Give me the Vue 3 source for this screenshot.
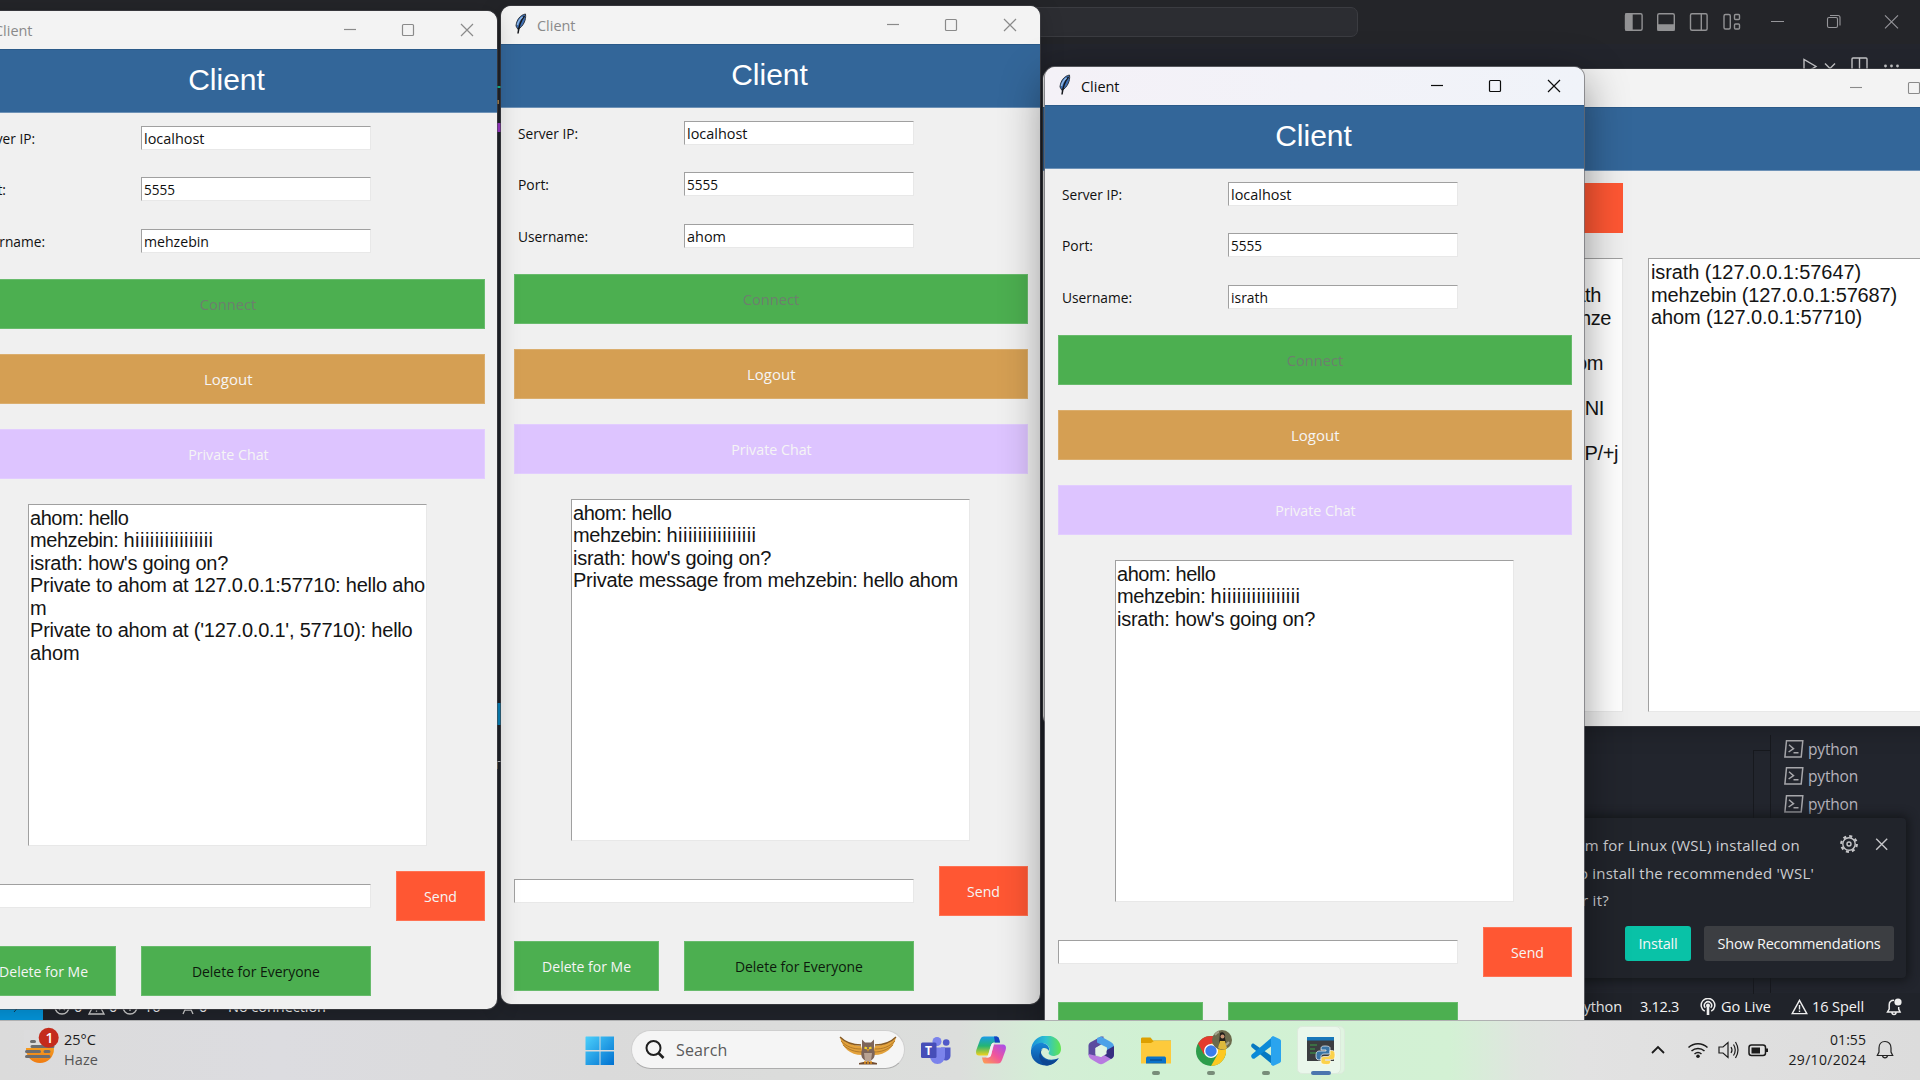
<script setup>
// Adjusts a run of text to the given width in pixels: by tracking, or,
// with the .x modifier, by condensing the glyphs themselves.
const vFit = {
  mounted(el, { value, modifiers }) {
    if (!value) return
    const w = el.getBoundingClientRect().width
    if (modifiers.x) {
      el.style.transform = `scaleX(${value / w})`
      return
    }
    el.style.letterSpacing = (value - w) / el.textContent.length + 'px'
  },
}

const common = [
  [{ t: 'ahom: hello', w: 98.5 }],
  [{ t: 'mehzebin: ', w: 93.5 }, { t: 'hiiiiiiiiiiiiiiii', w: 90 }],
  [{ t: "israth: how's going on?", w: 198 }],
]
const clients = [
  { id: 'second', user: 'ahom', uw: 39, lines: [...common, [{ t: 'Private message from mehzebin: hello ahom', w: 385 }]] },
  {
    id: 'first', user: 'mehzebin', uw: 65,
    lines: [
      ...common,
      [{ t: 'Private to ahom at 127.0.0.1:57710: hello aho', w: 395 }],
      [{ t: 'm', w: 17 }],
      [{ t: "Private to ahom at ('127.0.0.1', 57710): hello", w: 382.5 }],
      [{ t: 'ahom', w: 49.5 }],
    ],
  },
  { id: 'third', user: 'israth', uw: 37, lines: common },
]
const serverLog = [
  { t: 'israth', e: 21 }, { t: 'mehze', e: 11 }, { t: '', e: 0 }, { t: 'ahom', e: 19 },
  { t: '', e: 0 }, { t: 'NI', e: 18 }, { t: '', e: 0 }, { t: 'P/+j', e: 4 },
]
const users = [
  { t: 'israth (127.0.0.1:57647)', w: 210 },
  { t: 'mehzebin (127.0.0.1:57687)', w: 246 },
  { t: 'ahom (127.0.0.1:57710)', w: 211 },
]
</script>

<template>
  <div class="desktop">
    <!-- code editor in the background -->
    <div class="vscode">
      <div class="vs-title">
        <div class="vs-search"></div>
        <svg class="vs-icons" width="340" height="44" viewBox="1580 0 340 44" fill="none" stroke="#929294" stroke-width="1.4">
          <rect x="1625.5" y="13.7" width="16.6" height="16.6" rx="1.5" /><path d="M1626 14h6v16h-6z" fill="#929294" />
          <rect x="1657.7" y="13.7" width="16.6" height="16.6" rx="1.5" /><path d="M1658 25h16v5h-16z" fill="#929294" />
          <rect x="1690.5" y="13.7" width="16.6" height="16.6" rx="1.5" /><path d="M1701.3 14v16" />
          <rect x="1724" y="14.5" width="6.3" height="14.5" rx="1.5" /><rect x="1734.5" y="14.5" width="5" height="5" rx="1" /><rect x="1734.5" y="24" width="5" height="5" rx="1" />
          <g stroke="#96969a" stroke-width="1.1"><path d="M1771 21.5h13M1885 15.3l13 13M1898 15.3l-13 13" /><rect x="1827.5" y="17.5" width="10" height="10" rx="1.5" /><path d="M1830 15.5h8a2 2 0 0 1 2 2v8" /></g>
        </svg>
      </div>
      <div class="vs-tabs">
        <svg width="130" height="26" viewBox="1790 44 130 26" fill="none" stroke="#c5c5c8" stroke-width="1.4">
          <path d="M1804 59.5v14l12-7z" /><path d="M1825 63.5l5 5 5-5" /><rect x="1852" y="58" width="15" height="16" rx="1" /><path d="M1859.5 58v14" />
          <g fill="#c5c5c8" stroke="none"><circle cx="1885.5" cy="66" r="1.4" /><circle cx="1891.5" cy="66" r="1.4" /><circle cx="1897.5" cy="66" r="1.4" /></g>
        </svg>
      </div>
      <div class="vs-body">
        <svg class="slivers" width="4" height="720" viewBox="497 70 4 720"><path d="M497 86h4v2h-4z" fill="#10c5a2" /><path d="M497 100h2v4h-2z" fill="#b08a52" /><path d="M497 123h4v9h-4z" fill="#a63cd6" /><path d="M497 703h4v22h-4z" fill="#0b8cc6" /><path d="M497 761h4v1h-4z" fill="#c5c5c8" /><path d="M497 762h1v7h-1z" fill="#a8834c" /></svg>
        <div class="terms">
          <div v-for="i in 3" :key="i" class="term">
            <svg width="20" height="18" viewBox="0 0 20 18" fill="none" stroke="#a7a7ab" stroke-width="1.5"><path d="M2.5.8h16.3l-1.6 16.2H.9z" /><path d="M5 4.8l4.5 3.8L4.600 12M9.500 12.700h5" /></svg>
            <span v-fit="50">python</span>
          </div>
        </div>
      </div>
      <div class="vs-status">
        <div class="remote"><svg width="10" height="14" viewBox="0 0 10 14" stroke="#14384a" fill="none"><path d="M1 12l7-8" /></svg></div>
        <svg class="st1" width="16" height="16" viewBox="0 0 16 16" fill="none" stroke="#ccc" stroke-width="1.3"><circle cx="8" cy="8" r="7" /><path d="M5 5l6 6M11 5l-6 6" /></svg>
        <span class="st2">0</span>
        <svg class="st3" width="17" height="16" viewBox="0 0 17 16" fill="none" stroke="#ccc" stroke-width="1.3"><path d="M8.5 1L16 15H1zM8.5 6v4M8.5 11.5v1.3" /></svg>
        <span class="st4">0</span>
        <svg class="st5" width="16" height="16" viewBox="0 0 16 16" fill="none" stroke="#ccc" stroke-width="1.3"><circle cx="8" cy="8" r="7" /><path d="M8 7v5M8 4v1.5" /></svg>
        <span class="st6">16</span>
        <svg class="st7" width="14" height="16" viewBox="0 0 14 16" fill="none" stroke="#ccc" stroke-width="1.3"><path d="M7 4L2 15M7 4l5 11M4 11h6M3 1a6 6 0 0 0 0 6M11 1a6 6 0 0 1 0 6" /></svg>
        <span class="st8">0</span>
        <span v-fit="98" class="st9">No connection</span>
        <div class="st-right">
          <span v-fit="47">Python</span>
          <span v-fit="39" class="ver">3.12.3</span>
          <svg class="live" width="16" height="18" viewBox="0 0 16 18" fill="none" stroke="#eee" stroke-width="1.5"><path d="M4.8 13.2a6.8 6.8 0 1 1 6.4 0" /><path d="M5.3 9.8a3.6 3.6 0 1 1 5.4 0" /><circle cx="8" cy="7.4" r="1.2" fill="#eee" /><path d="M8 8v9" stroke-width="2.6" /></svg>
          <span v-fit="50">Go Live</span>
          <svg class="warn" width="17" height="16" viewBox="0 0 17 16" fill="none" stroke="#eee" stroke-width="1.4"><path d="M8.5 1.3L15.8 14.6H1.2zM8.5 6v4.5M8.5 11.5v1.5" /></svg>
          <span v-fit="52">16 Spell</span>
          <svg class="vbell" width="16" height="18" viewBox="0 0 16 18" fill="none" stroke="#eee" stroke-width="1.5"><path d="M8 2.2C4.7 2.2 3.2 4.5 3.2 7v4L1.5 14h12.6L12.7 11V9M6 14.5c0 2.6 4 2.6 4 0" /><circle cx="12" cy="4" r="3.6" fill="#eee" stroke="none" /></svg>
        </div>
      </div>
    </div>

    <div class="toast">
      <div class="toast-top">
        <div class="toast-text">
          <p><span v-fit="224">em for Linux (WSL) installed on</span></p>
          <p class="l2"><span v-fit="235">o install the recommended 'WSL'</span></p>
          <p class="l3"><span v-fit="27">r it?</span></p>
        </div>
        <svg class="toast-ic" width="60" height="20" viewBox="0 0 60 20" fill="none" stroke="#c5c5c8" stroke-width="1.4">
          <circle cx="10" cy="10" r="6.2" /><circle cx="10" cy="10" r="2" /><circle cx="10" cy="10" r="7.8" stroke-width="2.2" stroke-dasharray="3.06 3.06" />
          <path d="M37.2 4.7l11 11M48.2 4.7l-11 11" />
        </svg>
      </div>
      <div class="toast-btns">
        <div class="tb install"><span v-fit="39">Install</span></div>
        <div class="tb show"><span v-fit="163">Show Recommendations</span></div>
      </div>
    </div>

    <!-- server window -->
    <div class="win server">
      <div class="titlebar">
        <svg class="wc" width="153" height="38" viewBox="386 0 153 38" fill="none" stroke="#8a8a8a" stroke-width="1.1"><path d="M386 18.5h12" /><rect x="444.5" y="13.5" width="11" height="11" rx="1" /></svg>
      </div>
      <div class="banner"></div>
      <div class="sv-body">
        <div class="sv-left">
          <div class="sv-btn"></div>
          <div class="sunken sv-log">
            <div v-for="(l, i) in serverLog" :key="i" class="line" :style="{ paddingRight: l.e + 'px' }">{{ l.t }}</div>
          </div>
        </div>
        <div class="sunken sv-users">
          <div v-for="u in users" :key="u.t" class="line"><span v-fit="u.w">{{ u.t }}</span></div>
        </div>
      </div>
    </div>

    <!-- client windows -->
    <div v-for="c in clients" :key="c.id" class="win client" :class="c.id">
      <div class="titlebar">
        <svg class="feather" width="14" height="22" viewBox="0 0 14 22"><path d="M11.5 1C6 2 2.500 7 2 13l2 3.500C9 13.500 12.500 7 11.500 1z" fill="#3d6fb5" stroke="#303740" /><path d="M10.500 3C7 7 5 12 4 20.500" stroke="#15171c" stroke-width="1.500" fill="none" /><path d="M8.500 4C6 6 4 9 3.500 12" stroke="#93bbe8" stroke-width="1.400" fill="none" /></svg>
        <span v-fit.x="38.5" class="wt">Client</span>
        <svg class="wc" width="153" height="38" viewBox="386 0 153 38" fill="none" stroke="currentColor" stroke-width="1.2"><path d="M386 18.5h12" /><rect x="444.5" y="13.5" width="11" height="11" rx="1" /><path d="M503 13l12 12M515 13l-12 12" /></svg>
      </div>
      <div class="banner"><span>Client</span></div>
      <div class="form">
        <div class="row"><span class="lab"><span v-fit.x="60">Server IP:</span></span><div class="sunken entry"><span v-fit.x="60.5">localhost</span></div></div>
        <div class="row"><span class="lab"><span v-fit.x="31">Port:</span></span><div class="sunken entry"><span v-fit.x="31">5555</span></div></div>
        <div class="row"><span class="lab"><span v-fit.x="70">Username:</span></span><div class="sunken entry"><span v-fit.x="c.uw">{{ c.user }}</span></div></div>
        <div class="btn green"><span v-fit.x="56.5" class="dis">Connect</span></div>
        <div class="btn orange"><span v-fit.x="48.5">Logout</span></div>
        <div class="btn violet"><span v-fit.x="80.5">Private Chat</span></div>
        <div class="sunken chat"><div v-for="(l, i) in c.lines" :key="i" class="line"><span v-for="p in l" :key="p.t" v-fit="p.w">{{ p.t }}</span></div></div>
        <div class="sendrow"><div class="sunken msg"></div><div class="btn send"><span v-fit.x="33">Send</span></div></div>
        <div class="delrow"><div class="btn green me"><span v-fit.x="89">Delete for Me</span></div><div class="btn green all"><span v-fit.x="128">Delete for Everyone</span></div></div>
      </div>
    </div>

    <!-- taskbar -->
    <div class="taskbar">
      <div class="weather">
        <svg width="36" height="40" viewBox="23 1026 36 40"><defs><linearGradient id="sun" x1="0" y1="0" x2="0" y2="1"><stop offset="0" stop-color="#f8b62d" /><stop offset="1" stop-color="#f07c12" /></linearGradient></defs><circle cx="40" cy="1049" r="14" fill="url(#sun)" /><path d="M24 1030h18v18H24z" fill="#dcdcdd" /><path d="M31.5 1041.5h3M32 1046.5h21M26.5 1051.5h13M45 1051.5h4M26.5 1056.5h22.5" stroke="#6c6d70" stroke-width="3" stroke-linecap="round" /><circle cx="48.7" cy="1037.8" r="10" fill="#c42b1c" /><text x="45.5" y="1043" font-size="14" fill="#fff" font-family="Open Sans" font-weight="600">1</text></svg>
        <div class="wtext"><span v-fit="32">25°C</span><span v-fit="34" class="haze">Haze</span></div>
      </div>
      <div class="apps">
        <svg class="ic" viewBox="0 0 30 30"><defs><linearGradient id="wn" x1="0" y1="0" x2="1" y2="1"><stop offset="0" stop-color="#4cd0fb" /><stop offset="1" stop-color="#0070d0" /></linearGradient></defs><path d="M1 .5h13.5V14H.5V1zM15.5.5h13.5V14H15.5zM.5 15.5h14V29H.5zM15.5 15.5h13.5V29H15.5z" fill="url(#wn)" /></svg>
        <div class="search">
          <svg width="20" height="20" viewBox="0 0 20 20" fill="none" stroke="#1f1f1f"><circle cx="8.5" cy="8" r="7" stroke-width="2" /><path d="M13.5 13l5 5" stroke-width="2.6" /></svg>
          <span v-fit="51.5">Search</span>
          <svg class="owl" width="58" height="30" viewBox="0 0 58 30"><g fill="#e3a23c"><path d="M1 1c4 5 12 8 21 9l3 9C12 20 3 12 1 1z" /><path d="M57 1c-4 5-12 8-21 9l-3 9C46 20 55 12 57 1z" /></g><g stroke="#a56f24" stroke-width=".8" fill="none"><path d="M2 5c6 6 12 8 20 8M4 9c6 5 12 7 19 7M56 5c-6 6-12 8-20 8M54 9c-6 5-12 7-19 7" /></g><path d="M1 1c5 5 12 8 21 8M57 1c-5 5-12 8-21 8" stroke="#875a22" stroke-width="1.4" fill="none" /><path d="M23 3.5l3 3h6l3-3v10c2 6 0 11-6 12-6-1-8-6-6-12z" fill="#7c6459" /><path d="M25 17h8l-1 8h-6z" fill="#b9a292" /><path d="M25.5 11.500l2.500 1M32.500 11.500l-2.500 1" stroke="#f5d22d" stroke-width="2" /><path d="M28 13h2l-1 3z" fill="#e6a11a" /><path d="M20 27q9-3 18 0v1.500H20z" fill="#714c31" /><path d="M26 25v3M29 25v3M32 25v3" stroke="#e8981d" stroke-width="1.400" /></svg>
        </div>
        <svg class="ic" viewBox="0 0 30 30"><circle cx="16" cy="5.5" r="4.5" fill="#7b83eb" /><circle cx="25.2" cy="6.5" r="3.3" fill="#5059c9" /><path d="M20 11.5h9.500v8c0 6-7 6-9.500 3z" fill="#5059c9" /><path d="M9 11.500h15v9a7.500 7.500 0 0 1-15 0z" fill="#7b83eb" /><rect x="0" y="6.500" width="15.500" height="15.500" rx="1.500" fill="#464eb8" /><text x="3.900" y="18.500" font-family="Open Sans" font-weight="700" font-size="12" fill="#fff">T</text></svg>
        <svg class="ic" viewBox="0 0 30 30"><defs><linearGradient id="c1" x1="0" y1="0" x2="0" y2="1"><stop offset="0" stop-color="#1a9ce8" /><stop offset=".5" stop-color="#24b573" /><stop offset="1" stop-color="#f4d21c" /></linearGradient><linearGradient id="c2" x1="1" y1="0" x2="0" y2="1"><stop offset="0" stop-color="#a34df0" /><stop offset=".5" stop-color="#f0559c" /><stop offset="1" stop-color="#ffa44c" /></linearGradient></defs><path d="M8 .5h12c3 0 3 2 4 6h-5c-3 0-4 2-5 6l-2 7H3c-3 0-3.500-3-2.500-6L4 4C5 1.500 6 .5 8 .5z" fill="url(#c1)" /><path d="M18 .5h2c3 0 3 2 4 6h-5z" fill="#1641bf" /><path d="M22 27.500H10c-3 0-3-2-4-6h5c3 0 4-2 5-6l2-7h9c3 0 3.500 3 2.500 6L26 24c-1 2.500-2 3.500-4 3.500z" fill="url(#c2)" /><path d="M14 12.500c1-4 2-6 4-6l-3 13c-1 2-2 2-5 2 2-1 3-5 4-9z" fill="#f5eef3" /></svg>
        <svg class="ic" viewBox="0 0 30 30"><defs><linearGradient id="e1" x1="0" y1="0" x2="1" y2="0"><stop offset="0" stop-color="#168edb" /><stop offset=".5" stop-color="#2ec1d1" /><stop offset="1" stop-color="#62e64e" /></linearGradient><linearGradient id="e2" x1="0" y1="0" x2="0" y2="1"><stop offset="0" stop-color="#1687d8" /><stop offset="1" stop-color="#0b4a9a" /></linearGradient></defs><path d="M0 14C1 4 8-.5 15-.5 25-.5 30 6 30 13c0 5-4 7-8 7-4-1-5-2-4-4 2-3-1-9-7-9C6 7 2 10 0 14z" fill="url(#e1)" /><path d="M0 14C2 9 7 6 12 7c4 1 7 4 6 8-1-2-3-3-5-3-3 0-4 4-2 7 3 5 10 6 17 3-4 6-9 7.500-13 7.500C6 29.500-1 23 0 14z" fill="url(#e2)" /><path d="M12 12.500c-3 2-3 8 2 11 4 2 9 2 13-1-3 5-8 7-12 7-5-2-8-8-6-13 .5-2 2-3.500 3-4z" fill="#0d4692" /></svg>
        <svg class="ic" viewBox="0 0 30 30"><path d="M15 .5l-9 5C3 7 2.500 8 2.500 11v8l7 3V12l8-5V.5z" fill="#5b4b9f" /><path d="M15 .5l9 5c3 1.500 4 3 4 6v9l-7-4v-5l-10-5V2z" fill="#4da1e8" /><path d="M2.500 18c0 3 1 4 4 6l6 3.500c2 1 3 1 5 0L25 23c2-1.500 3-2 3-5l-7-3-6 6z" fill="#b77be0" /><path d="M21 14l7-4v8c0 3-1 4-3 5l-7-4z" fill="#362e80" /><path d="M15 9l5.500 3v6L15 21l-5.500-3v-6z" fill="#e1f4e4" /></svg>
        <div class="app"><svg class="ic" viewBox="0 0 30 30"><path d="M0 3c0-1 .5-1.500 1.500-1.500h8L12 4.500h18V8H0z" fill="#dda000" /><path d="M0 7h10l3-2h17v22.500H0z" fill="#fdca3c" /><path d="M5 27.500v-5c0-1.500 1-2 2-2h16c1 0 2 .5 2 2v5z" fill="#0a73c9" /><path d="M9 24h12" stroke="#06407e" /></svg><i></i></div>
        <div class="app"><svg class="ic" viewBox="0 0 30 30"><circle cx="15" cy="15" r="15" fill="#2d9d4b" /><path d="M2 7.500A15 15 0 0 1 28 7.500H15l-7 11z" fill="#e33b2e" /><path d="M28 7.500A15 15 0 0 1 15 30l6.500-11.500L15 7.500z" fill="#fdc921" /><circle cx="15" cy="15" r="7" fill="#fff" /><circle cx="15" cy="15" r="5.700" fill="#3b7ded" /></svg><svg class="avatar" width="20" height="20" viewBox="0 0 20 20"><circle cx="10" cy="10" r="10" fill="#6b6a4c" /><path d="M8 3c3-2 6 1 5 5l1 5-7 1z" fill="#24201c" /><path d="M6 18l2-7h5l2 7q-4 3-9 0z" fill="#dcb93c" /><circle cx="10.500" cy="6.500" r="2" fill="#c99474" /><path d="M3 5q2-3 4-3M14 15l3-3" stroke="#a4a48c" stroke-width="2" /></svg><i></i></div>
        <div class="app"><svg class="ic" viewBox="0 0 30 30"><path d="M2.500 7.500Q1 7 .5 8.500c-.5 1-.5 2 .5 3L22 29V21z" fill="#0679c2" /><path d="M22 .5L.8 18.500c-1 1-.8 3 .7 4 1 .6 1.800.3 2.500-.2L22 9z" fill="#0a8ad8" /><path d="M22 0l6.500 3c1 .5 1.500 1.200 1.500 2.200v19.600c0 1-.5 1.700-1.500 2.200L22 30l-2-1.500V1.500z" fill="#2aa4ee" /></svg><i></i></div>
        <div class="app active"><div class="under"></div><div class="plate"></div><svg class="ic" viewBox="0 0 30 30"><path d="M1 1h27v24H1z" fill="#3b3d40" /><path d="M1 1h27v3.500H1z" fill="#1878ba" /><path d="M4 9h7M4 13h5M4 17h8" stroke="#3d8045" stroke-width="1.300" /><path d="M19 10c-4 0-4 1-4 4h5v1h-6c-3 0-4 1-4 5 0 3 1 4 4 4h1v-3c0-2 1-3 3-3h4c2 0 2-1 2-3v-3c0-1-1-2-5-2z" fill="#3974a5" stroke="#fff" stroke-width=".7" /><path d="M20.500 28.500c4 0 4-1 4-4h-5v-1h6c3 0 3.500-1 3.500-5 0-3-1-4-3.500-4H24v3c0 2-1 3-3 3h-3c-2 0-3 1-3 3v2c0 2 1 3 5.500 3z" fill="#fbd24c" stroke="#fff" stroke-width=".7" /></svg><i></i></div>
      </div>
      <div class="tray">
        <svg width="118" height="30" viewBox="1650 1035 118 30" fill="none" stroke="#1b1b1b" stroke-width="1.5">
          <path d="M1652 1053l6-6 6 6" stroke-width="1.800" />
          <path d="M1688.500 1047.500a14 14 0 0 1 19 0M1691.500 1051a9.500 9.500 0 0 1 13 0M1694.500 1054a5.300 5.300 0 0 1 7 0" /><circle cx="1698" cy="1056.300" r="1.800" fill="#1b1b1b" stroke="none" />
          <path d="M1719 1047h4l5-4.500v15l-5-4.500h-4zM1731 1047q2 3 0 6M1733.500 1044.500q3.500 5.500 0 11M1735.500 1042q5 8 0 16" stroke-width="1.200" />
          <rect x="1749" y="1045" width="16.500" height="10.500" rx="2.500" /><rect x="1751.500" y="1047.500" width="8.500" height="6" fill="#1b1b1b" stroke="none" /><path d="M1767 1048.500v3.500" stroke-width="2" />
        </svg>
        <div class="clock"><span v-fit="36">01:55</span><span v-fit="77.5">29/10/2024</span></div>
        <svg class="bell" width="18" height="20" viewBox="0 0 18 20" fill="none" stroke="#222" stroke-width="1.2"><path d="M9 1.500C5 1.500 3 4.500 3 8v4l-1.700 3.500h15.400L15 12V8c0-3.500-2-6.500-6-6.500zM6.500 15.700c.5 3 4.500 3 5 0" /></svg>
      </div>
    </div>
  </div>
</template>

<style>
body { margin: 0; overflow: hidden; }
</style>

<style scoped>
* { box-sizing: border-box; }
svg { display: block; flex: none; }
span { white-space: pre; }
.desktop { position: relative; width: 1920px; height: 1080px; overflow: hidden; background: #20232a; font-family: "Open Sans", "Noto Sans", sans-serif; font-size: 14px; }

.vscode { display: flex; flex-direction: column; height: 1020px; background: #22252d; }
.vs-title { display: flex; align-items: flex-start; height: 44px; background: #242529; padding-left: 560px; }
.vs-search { width: 798px; height: 30px; margin-top: 7px; border: 1px solid #3b3c41; border-radius: 7px; background: #2c2d32; }
.vs-icons { margin-left: auto; }
.vs-tabs { display: flex; justify-content: flex-end; height: 26px; background: #23252d; }
.vs-body { position: relative; display: flex; align-items: flex-start; justify-content: space-between; height: 923px; padding-left: 497px; }
.terms { width: 150px; height: 258px; margin-top: 665px; padding-left: 13px; border-left: 1px solid #17191e; position: relative; }
.terms::before { content: ""; position: absolute; left: -18px; top: 15px; width: 17px; height: 243px; border: 1px solid #17191e; border-width: 1px 0 0 1px; }
.term { display: flex; align-items: center; gap: 4px; height: 27.5px; color: #b6b3bc; font-size: 15.5px; }
.vs-status { display: flex; align-items: center; height: 27px; background: #20232a; color: #f4f4f4; font-size: 14.5px; line-height: 26px; }
.remote { display: flex; align-items: center; justify-content: center; width: 43px; height: 27px; padding-right: 8px; background: #0496dc; }
.st1 { margin-left: 11px; } .st2 { margin-left: 4px; width: 14px; } .st3 { margin: 0 4px 0 0; } .st4 { width: 13px; }
.st5 { margin-right: 6px; } .st6 { width: 37px; } .st7 { margin-right: 4px; } .st8 { width: 29px; }
.st-right { display: flex; align-items: center; margin-left: auto; padding-right: 18px; }
.ver { margin-left: 18px; } .live { margin: 0 5px 0 21px; } .warn { margin: 0 4px 0 20px; } .vbell { margin-left: 22px; }

.toast { position: absolute; left: 1400px; top: 818px; width: 506px; height: 160px; border-radius: 4px; background: #21242b; box-shadow: 0 0 10px 3px #15171b; color: #cdced2; font-size: 15px; }
.toast-top { display: flex; justify-content: flex-end; padding-right: 14px; padding-top: 14px; }
.toast-text { width: 238px; margin-right: 16px; }
.toast-text p { display: flex; justify-content: flex-end; margin: 0; padding-right: 14px; height: 27.5px; line-height: 27px; }
.toast-text .l2 { padding-right: 0; } .toast-text .l3 { padding-right: 205px; }
.toast-ic { margin: 2px -7px 0 9px; }
.toast-btns { display: flex; justify-content: flex-end; gap: 13px; margin-top: 11px; padding-right: 12px; }
.tb { display: flex; align-items: center; justify-content: center; height: 35px; border-radius: 3px; background: #3c3e42; color: #f6f6f6; }
.install { width: 66px; background: #09c2a7; font-size: 14.5px; } .show { width: 190px; font-size: 14.5px; }

.win { position: absolute; display: flex; flex-direction: column; background: #f0f0f0; border-radius: 10px; box-shadow: 0 0 0 1px rgba(70,70,75,.6), 0 4px 24px rgba(0,0,0,.2); }
.client { width: 539px; height: 998px; }
.first { left: -42px; top: 11px; }
.second { left: 501px; top: 6px; }
.third { left: 1045px; top: 67px; box-shadow: 0 0 0 1px rgba(110,110,115,.7), 0 12px 44px rgba(0,0,0,.42); }
.server { left: 1043px; top: 69px; width: 960px; height: 657px; }
.titlebar { display: flex; align-items: center; height: 38px; flex: none; padding-left: 13px; background: #f3f3f3; border-radius: 10px 10px 0 0; color: #8a8a8a; font-size: 15px; }
.third .titlebar { background: linear-gradient(90deg, #f4f1f7, #f0f3f9); color: #0c0c0c; }
.wt { margin: -1px 0 0 9px; transform-origin: left; }
.feather { margin-top: -2px; }
.wc { margin-left: auto; }
.banner { display: flex; align-items: center; justify-content: center; flex: none; height: 64px; background: #336699; border-top: 1px solid #2b5a89; border-bottom: 1px solid #6e92b7; color: #fff; font: 30px "Liberation Sans", Arial, sans-serif; padding: 0 2px 3px 0; }
.form { display: flex; flex-direction: column; padding: 13px 12px 0 13px; font-size: 15px; line-height: 20px; }
.form .btn > span { transform-origin: center; }
.lab > span, .entry > span { display: inline-block; transform-origin: left; }
.row { display: flex; align-items: center; height: 24px; margin-bottom: 27.3px; color: #101010; }
.lab { width: 170px; padding-left: 4px; }
.sunken { background: #fff; border: 1px solid; border-color: #a0a0a0 #e8e8e8 #e8e8e8 #a0a0a0; }
.entry { display: flex; align-items: center; width: 230px; height: 24px; padding-left: 2px; }
.btn { display: flex; align-items: center; justify-content: center; height: 50px; color: #f5f5f5; box-shadow: inset 0 0 0 1px rgba(255,255,255,.16); }
.form > .btn { margin-bottom: 25px; width: 514px; }
.form > .btn.green { margin-top: -1px; }
.green { background: #4caf50; } .orange { background: #d59f53; } .violet { background: #ddc4ff; } .send { background: #ff5733; }
.dis { color: #6d7f6e; }
.chat { align-self: flex-start; margin-left: 57px; width: 399px; height: 342px; padding: 2px 0 0 1px; }
.line { height: 22.5px; line-height: 22.5px; font-family: "Liberation Sans", Arial, sans-serif; font-size: 20px; color: #141414; white-space: nowrap; }
.sendrow { display: flex; align-items: center; justify-content: space-between; margin-top: 25px; height: 50px; width: 514px; }
.msg { width: 400px; height: 24px; } .send { width: 89px; }
.delrow { display: flex; gap: 25px; margin-top: 25px; }
.me { width: 145px; } .all { width: 230px; color: #0c1a0c; }

.sv-body { display: flex; gap: 25px; padding: 12px 0 0 12px; height: 555px; overflow: hidden; }
.sv-left { width: 568px; flex: none; }
.sv-btn { height: 50px; background: #ff5733; }
.sv-log { height: 454px; margin-top: 25px; padding-top: 25px; text-align: right; letter-spacing: -0.4px; }
.sv-users { width: 400px; flex: none; height: 454px; margin-top: 75px; padding: 2px 0 0 2px; }

.taskbar { position: absolute; left: 0; top: 1020px; width: 1920px; height: 60px; display: flex; border-top: 1px solid #b0b1b2; background: linear-gradient(90deg, #dbdbdb 0, #dcdce0 280px, #dadada 600px, #dcdedc 960px, #d4eed6 1040px, #d0f1d3 1150px, #d3f1d4 1450px, #dfe5df 1520px, #e2e2e2 1580px, #dcdcdc 1920px); color: #1b1b1b; }
.weather { display: flex; width: 585px; padding: 5px 0 0 23px; gap: 5px; }
.wtext { display: flex; flex-direction: column; align-items: flex-start; padding-top: 4px; line-height: 20px; font-size: 14.5px; }
.haze { color: #555; }
.apps { display: flex; align-items: flex-start; gap: 25px; padding-top: 15px; width: 1065px; }
.ic { width: 30px; height: 30px; }
.search { display: flex; align-items: center; width: 274px; height: 39px; margin: -6px -9px 0 -9px; padding: 0 7px 0 13px; border-radius: 20px; background: #f5f5f5; border: 1px solid #cfcfcf; border-bottom-color: #adadad; color: #5a5a5a; font-size: 16px; }
.search span { margin-left: 11px; margin-top: 1px; } .owl { margin-left: auto; margin-top: 3px; }
.app { position: relative; width: 30px; height: 38px; }
.app > .ic { position: relative; }
.app i { position: absolute; left: 11px; bottom: -1px; width: 8px; height: 4px; border-radius: 2px; background: #788c79; }
.active i { left: 5px; width: 20px; background: #4b76ae; }
.avatar { position: absolute; left: 16px; top: -6px; }
.plate, .under { position: absolute; left: -9px; top: -10px; width: 44px; height: 48px; border-radius: 5px; background: #eaf7eb; border: 1px solid #dcebdc; }
.under { width: 48px; background: #e0f4e1; }
.tray { display: flex; padding-top: 14px; }
.clock { display: flex; flex-direction: column; align-items: flex-end; width: 98px; margin-top: -5px; line-height: 20px; font-size: 14px; }
.bell { margin: 5px 0 0 10px; }
</style>
